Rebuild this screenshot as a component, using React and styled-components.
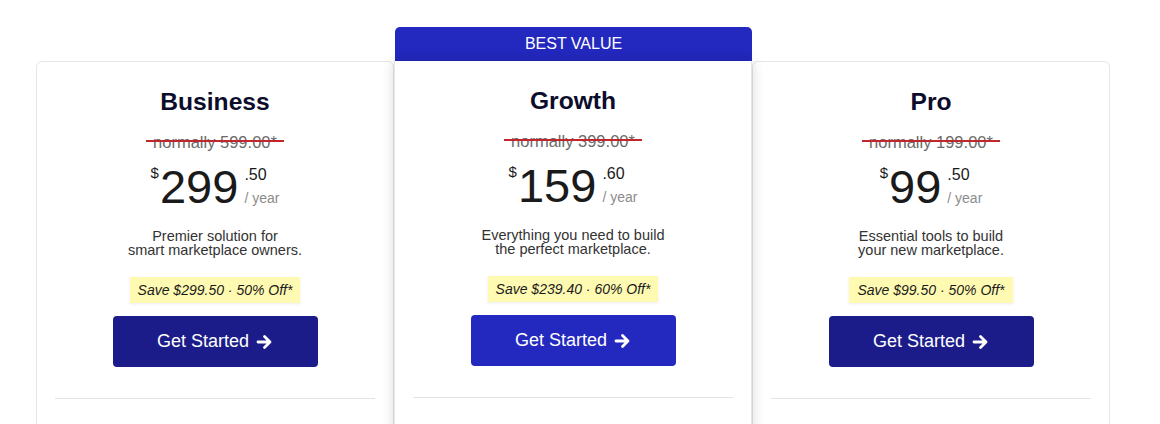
import React from "react";
import styled, { createGlobalStyle } from "styled-components";

const GlobalStyle = createGlobalStyle`
  body {
    margin: 0;
    background: #ffffff;
    font-family: "Liberation Sans", Arial, sans-serif;
  }
`;

const plans = [
  {
    name: "Business",
    normally: "599.00",
    dollars: "299",
    cents: ".50",
    lines: ["Premier solution for", "smart marketplace owners."],
    save: "Save $299.50 · 50% Off*",
  },
  {
    name: "Growth",
    normally: "399.00",
    dollars: "159",
    cents: ".60",
    lines: ["Everything you need to build", "the perfect marketplace."],
    save: "Save $239.40 · 60% Off*",
    featured: true,
  },
  {
    name: "Pro",
    normally: "199.00",
    dollars: "99",
    cents: ".50",
    lines: ["Essential tools to build", "your new marketplace."],
    save: "Save $99.50 · 50% Off*",
  },
];

function Arrow() {
  return (
    <svg width="17" height="16" viewBox="0 0 17 16" fill="none">
      <path
        d="M2 8h12M8.5 2.5L14 8l-5.5 5.5"
        stroke="#fff"
        strokeWidth="2.8"
        strokeLinecap="round"
        strokeLinejoin="round"
      />
    </svg>
  );
}

function App() {
  return (
    <>
      <GlobalStyle />
      <Page>
        {plans.map((p) => (
          <Column key={p.name} $featured={p.featured}>
            {p.featured && <Banner>BEST VALUE</Banner>}
            <Card $featured={p.featured}>
              <Title>{p.name}</Title>
              <Normally>normally {p.normally}*</Normally>
              <Price>
                <Currency>$</Currency>
                <Dollars>{p.dollars}</Dollars>
                <PriceSide>
                  <Cents>{p.cents}</Cents>
                  <Per>/ year</Per>
                </PriceSide>
              </Price>
              <Description>
                {p.lines[0]}
                <br />
                {p.lines[1]}
              </Description>
              <Save>{p.save}</Save>
              <StartButton $featured={p.featured}>
                Get Started <Arrow />
              </StartButton>
              <Divider />
            </Card>
          </Column>
        ))}
      </Page>
    </>
  );
}

const Page = styled.div`
  display: flex;
  align-items: flex-start;
  padding: 27px 0 0 36px;
  height: 424px;
  box-sizing: border-box;
  overflow: hidden;
`;

const Column = styled.div`
  width: 358px;
  display: flex;
  flex-direction: column;
  padding-top: ${(p) => (p.$featured ? "0" : "34px")};
  position: relative;
  z-index: ${(p) => (p.$featured ? 2 : 1)};
`;

const Banner = styled.div`
  height: 34px;
  margin-left: 1px;
  background: #2328be;
  color: #ffffff;
  font-size: 16px;
  line-height: 34px;
  text-align: center;
  border-radius: 5px 5px 0 0;
`;

const Card = styled.div`
  height: 420px;
  background: #ffffff;
  border: 1px solid #e6e6e6;
  border-top: ${(p) => (p.$featured ? "none" : "1px solid #e6e6e6")};
  border-radius: ${(p) => (p.$featured ? "0" : "6px 6px 0 0")};
  box-shadow: ${(p) =>
    p.$featured ? "0 0 12px rgba(0, 0, 0, 0.16)" : "none"};
  display: flex;
  flex-direction: column;
  align-items: center;
  padding-top: 26px;
  box-sizing: border-box;
`;

const Title = styled.div`
  font-size: 24.6px;
  font-weight: 700;
  color: #0c0c2c;
  line-height: 28px;
`;

const Normally = styled.div`
  margin-top: 17px;
  font-size: 16.5px;
  line-height: 18px;
  color: #6b6b6b;
  position: relative;
  padding: 0 7px;

  &::after {
    content: "";
    position: absolute;
    left: 0;
    right: 0;
    top: 50%;
    height: 1.5px;
    background: #c0262c;
    transform: translateY(-2px);
  }
`;

const Price = styled.div`
  display: flex;
  align-items: flex-start;
  margin-top: 12px;
  color: #1a1a1a;
`;

const Currency = styled.span`
  font-size: 15px;
  line-height: 15px;
  margin-top: 2px;
  margin-right: 1px;
`;

const Dollars = styled.span`
  font-size: 47px;
  line-height: 47px;
`;

const PriceSide = styled.div`
  display: flex;
  flex-direction: column;
  margin-left: 6px;
  padding-top: 4px;
`;

const Cents = styled.span`
  font-size: 16px;
  line-height: 16px;
`;

const Per = styled.span`
  margin-top: 8px;
  font-size: 14px;
  line-height: 14px;
  color: #8c8c8c;
`;

const Description = styled.div`
  margin-top: 19px;
  font-size: 14.5px;
  line-height: 14px;
  color: #333333;
  text-align: center;
`;

const Save = styled.div`
  margin-top: 20px;
  padding: 0 8px;
  height: 26px;
  line-height: 26px;
  background: #fffab2;
  font-size: 14px;
  font-style: italic;
  color: #1a1a1a;
  box-shadow: 0 1px 3px rgba(0, 0, 0, 0.08);
`;

const StartButton = styled.button`
  margin-top: 13px;
  width: 205px;
  height: 51px;
  border: none;
  border-radius: 4px;
  background: ${(p) => (p.$featured ? "#2328be" : "#1b1c8a")};
  color: #ffffff;
  font-family: "Liberation Sans", Arial, sans-serif;
  font-size: 18px;
  display: flex;
  align-items: center;
  justify-content: center;
  gap: 7px;
  cursor: pointer;
`;

const Divider = styled.div`
  margin-top: 31px;
  align-self: stretch;
  margin-left: 18px;
  margin-right: 18px;
  height: 1px;
  background: #e3e3e3;
`;

export default App;
